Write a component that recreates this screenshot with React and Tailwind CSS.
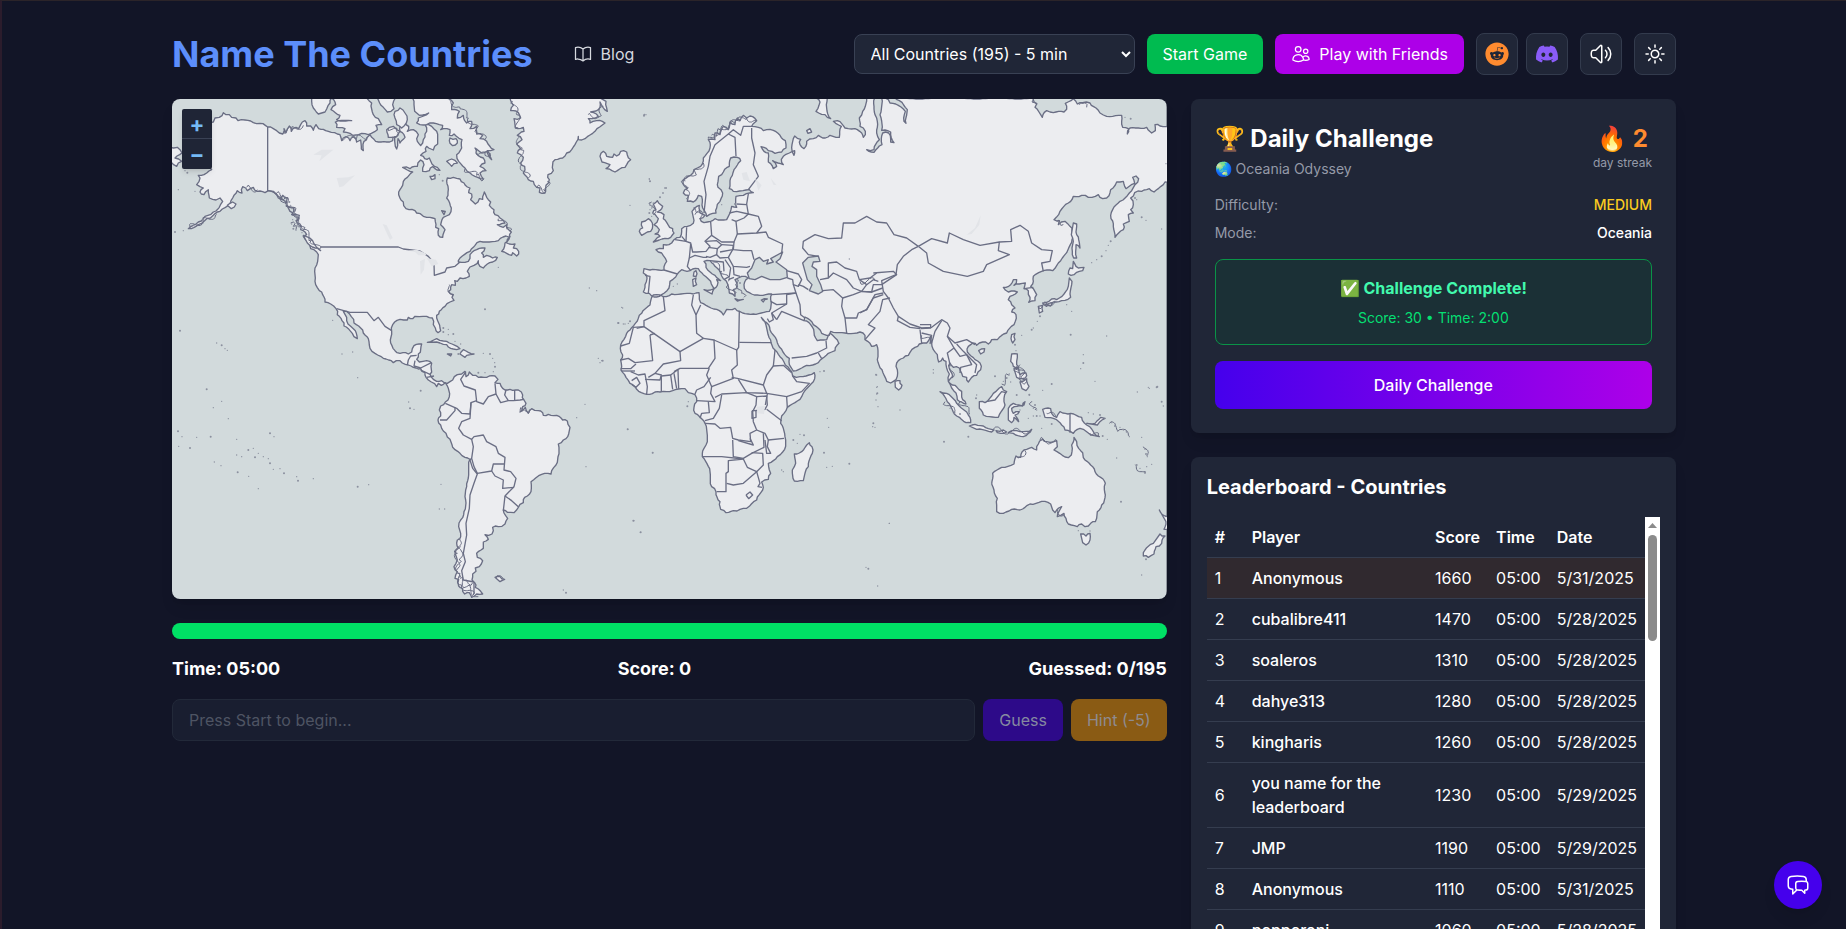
import { useState } from "react";
import { FaDiscord, FaReddit } from "react-icons/fa";
import {
  HiOutlineBookOpen,
  HiOutlineChatBubbleLeftRight,
  HiOutlineSpeakerWave,
  HiOutlineSun,
  HiOutlineUsers,
} from "react-icons/hi2";

const SCORES = [
  { player: "Anonymous", score: 1660, time: "05:00", date: "5/31/2025" },
  { player: "cubalibre411", score: 1470, time: "05:00", date: "5/28/2025" },
  { player: "soaleros", score: 1310, time: "05:00", date: "5/28/2025" },
  { player: "dahye313", score: 1280, time: "05:00", date: "5/28/2025" },
  { player: "kingharis", score: 1260, time: "05:00", date: "5/28/2025" },
  { player: "you name for the leaderboard", score: 1230, time: "05:00", date: "5/29/2025" },
  { player: "JMP", score: 1190, time: "05:00", date: "5/29/2025" },
  { player: "Anonymous", score: 1110, time: "05:00", date: "5/31/2025" },
  { player: "pepperoni", score: 1060, time: "05:00", date: "5/28/2025" },
];

// The world is drawn in six sheets, each with its own origin on the map
const SHEETS = {
  A: [-6, -3],
  B: [-6, 723],
  C: [1284, -3],
  D: [1284, 573],
  E: [2064, -3],
  F: [2064, 693],
};

// shape = [sheet, points, sheet, points, ...]
const toPoints = (shape) => {
  const out = [];
  for (let i = 0; i < shape.length; i += 2) {
    const [dx, dy] = SHEETS[shape[i]];
    shape[i + 1]
      .trim()
      .split(/\s+/)
      .forEach((p) => {
        const [x, y] = p.split(",").map(Number);
        out.push([x + dx, y + dy]);
      });
  }
  return out;
};

const trace = (shape) => toPoints(shape).join(" ");

// Breaks long straight runs into small uneven steps so coasts look natural
const fray = (shape, step, amp) => {
  const pts = toPoints(shape);
  const out = [];
  let n = 0;
  for (let i = 0; i < pts.length - 1; i++) {
    const [x1, y1] = pts[i];
    const [x2, y2] = pts[i + 1];
    const len = Math.hypot(x2 - x1, y2 - y1);
    const parts = Math.max(1, Math.round(len / step));
    out.push(pts[i]);
    for (let k = 1; k < parts; k++) {
      n++;
      const off = amp * Math.sin(n * 12.9 + x1 * 0.7 + y1 * 1.3);
      const x = x1 + ((x2 - x1) * k) / parts - ((y2 - y1) / len) * off;
      const y = y1 + ((y2 - y1) * k) / parts + ((x2 - x1) / len) * off;
      out.push([Math.round(x), Math.round(y)]);
    }
  }
  out.push(pts[pts.length - 1]);
  return out.join(" ");
};

const LAND = [
  // Americas
  [
    "A",
    `130,72 135,60 148,58 160,44 168,50 178,50 185,58 198,60 204,68 225,66 250,74 270,76 293,87 310,92 320,98 338,108 342,92 348,104 358,84 364,100
    378,88 386,92 392,80 405,68 410,84 422,84 430,97 438,80 446,92 460,94 475,100 494,104 510,110 515,128 528,116 540,128 552,116 560,132 572,126
    574,145 580,158 582,130 592,118 600,110 612,124 625,132 650,132 668,128 675,112 680,153 684,122 690,135 705,118 690,100 690,85 702,70 716,85 712,100 730,95
    745,110 740,122 752,143 760,125 765,108 770,100 765,80 785,85 800,100 803,138 790,156 770,145 768,160 752,172 764,182 778,180 786,198 802,208 810,217 788,206 778,218
    758,220 762,200 752,186 742,205 720,212 698,208 728,222 712,238 700,250 698,262 690,275 686,290 700,312 708,332 726,334 740,345 760,355 780,358 795,362
    797,388 806,392 805,412 818,418 825,395 812,380 820,358 838,350 844,330 836,308 830,300 834,265 832,240 850,238 870,243 882,255 900,270 896,284 905,288
    902,305 916,318 928,302 938,304 943,282 955,305 962,312 958,322 972,335 975,350 990,360 1005,375 982,380 1000,388 1010,380 1016,395 1024,402 1018,418 1008,414
    985,428 930,430 915,442 900,460 865,488 865,492 895,490 900,470 920,455 945,450 935,465 940,478 950,472 968,480 982,478 968,492 940,510 930,505 925,488
    912,502 900,507 892,520 898,535 888,540 870,540 862,550 854,548 856,562 845,560 842,575 836,580 850,590 846,598 852,607 840,612 825,625 808,640 800,652 806,675 812,698 804,704
    796,690 790,680 787,660 770,655 748,656 735,655 728,662 715,658 712,666 690,664 668,680 665,700 662,735 675,758 690,766 715,768 725,762 732,743 755,738 752,755 745,768`,
    "B",
    `745,42 740,58 748,66 770,62 785,70 784,88 780,103 790,118 800,124 815,122 832,130 848,120 862,104 875,102 885,94 888,110 898,96 908,106 925,112 950,112 975,108 984,118 975,128
    990,130 1005,150 1020,148 1045,150 1058,165 1062,180 1068,190 1058,200 1050,216 1066,202 1075,220 1085,206 1105,212 1118,218 1120,226 1135,223 1160,226 1178,240 1192,243 1200,262
    1196,282 1180,300 1165,312 1164,350 1158,375 1143,402 1115,403 1083,425 1083,455 1064,472 1060,488 1045,502 1032,518 1012,517 1000,510 1013,535 1005,552 985,560 968,562 966,582 945,584
    955,598 940,606 940,625 920,640 922,652 938,662 928,680 916,684 918,694 908,702 906,720 914,728 916,742 938,762 920,762 905,772 898,758 884,762 878,745 866,738 866,718
    855,715 862,695 852,680 862,660 855,640 865,625 862,600 872,590 866,560 872,540 882,515 887,480 890,440 896,405 900,358 885,352 870,340 848,322 840,298 828,280 812,255 804,240
    812,228 808,210 812,198 826,186 838,170 835,145 826,128 814,136 805,130 800,140 784,126 768,112 765,98 752,86 738,84 715,75 690,62 670,68 640,55 615,40 600,25 597,5`,
    "A",
    `595,722 580,705 572,690 552,675 544,656 530,640 520,640 530,658 534,678 550,692 562,722 552,716 540,698 522,684 516,668 502,650 498,632 482,618 465,612 458,590 448,578 435,550 435,510
    444,480 440,462 422,452 412,430 400,415 410,410 392,395 390,378 378,368 388,352 365,350 372,330 352,325 352,300 338,292 334,305 320,290 295,278 285,284 262,280 250,268 232,278 218,266 216,285 202,278
    188,300 180,318 150,340 130,352 110,362 85,380 55,392 85,372 105,355 130,342 148,328 158,310 150,300 138,306 118,300 115,275 102,290 90,282 100,270 80,260 90,240 85,232 110,225 125,215 100,200 80,180 90,150 100,120 95,90 130,72`,
  ],
  // Eurasia and Africa
  [
    "C",
    `430,52 440,60 450,54 470,68 455,85 475,88 490,98 520,97 540,112 556,128 558,150 545,162 525,166 505,158 483,146 492,160 505,165 505,192 520,212 530,205 518,188 550,200 544,184 568,165 584,158 582,172
    576,140 584,114 602,124 600,140 612,152 620,130 640,122 655,112 668,120 690,112 718,118 724,85 700,70 712,68 735,90 765,92 785,105 790,118 796,100 780,85 778,60 788,40 800,0 824,0
    825,50 832,70 830,105 838,125 822,155 800,155 822,163 846,140 848,105 866,105 872,132 882,134 872,102 845,97 840,50 845,0`,
    "E",
    `75,0 90,15 115,22 136,40 132,70 138,76 142,35 118,8 105,0 395,0 518,0 530,18 525,28 547,58 560,38 580,44 612,42 620,34 616,16 640,2 652,18 668,14 690,15 708,30 720,45 740,55 785,52 788,88 805,92 802,108 810,90
    860,88 875,105 886,98 885,80 900,84 935,82 935,250 915,252 882,282 868,272 845,280 824,284 812,300 820,320 812,335 820,345 805,350 808,370 790,378 790,395 765,418 760,385 753,362 758,335 780,310 808,285 825,260
    836,242 828,234 818,238 824,256 798,272 790,250 770,252 752,275 740,300 728,302 715,290 685,298 665,292 640,295 625,315 600,340 582,365 598,368 595,380 615,370 630,385 636,400 636,425 624,455 602,488 578,518 545,520
    520,535 520,550 512,565 530,590 525,608 506,613 510,598 505,578 492,572 496,555 478,558 462,562 470,545 460,545 452,560 430,568 445,582 472,582 450,595 445,605 455,620 465,630 455,642 468,650 462,680
    448,692 440,705 412,725 395,725 385,738 368,732 350,742 338,735 325,745 322,762 345,785 360,795 362,815 350,832 335,838 325,852 320,838 308,835 298,810 280,808 270,795 268,812 278,835 265,850 285,862 305,880 308,905 318,918
    305,912 292,905 288,885 275,870 265,850 268,828 258,790 248,780 236,792 232,770 220,755 215,735 212,715 200,735 178,738 165,748 145,772 130,780 110,795 112,815 108,845 92,855 80,850 66,815 52,785 50,740 35,745 15,725`,
    "C",
    `795,712 780,702 735,705 692,700 688,712 665,706 640,680 615,657 612,668 632,680 642,702 652,728 680,725 690,705 716,735`,
    "D",
    `717,160 705,182 685,190 655,218 620,226 580,243 573,232 568,205 545,178 530,150 510,120 500,98 484,82 498,105 512,150 525,180 540,200 556,225 575,245 578,258 600,260 643,248 640,275 605,320 562,352 545,378 542,400 555,440 554,478 532,500 505,520 512,550
    505,568 485,576 488,600 470,630 440,655 420,658 400,662 378,668 362,658 360,635 348,605 335,590 330,545 307,500 312,475 322,455 315,400 285,370 282,352 290,335 285,314 265,308 255,296 235,297 200,305
    180,306 165,306 140,313 110,298 90,280 78,262 63,240 62,210 68,195 62,165 80,130 90,120 115,85 125,70 150,45 160,15 190,20 215,12 280,12 297,8 302,38 325,50 350,58 370,75 380,58 405,55 420,65 460,72 500,65`,
    "C",
    `508,640 512,605 515,588 480,592 455,588 440,580 432,560 445,540 425,535 405,545 412,565 400,575 405,595 388,585 385,565 378,548 362,525 345,505 330,488 312,490 318,508 345,532 362,548 350,545 352,562 342,572 332,550 310,530
    295,512 270,518 245,515 232,528 210,550 207,570 185,590 162,597 148,586 130,582 135,560 140,532 130,525 132,512 150,516 192,516 200,490 185,465 168,455 190,452 190,440 215,435 222,425 240,418 245,392 262,385 280,376
    276,340 298,322 300,345 315,352 300,362 312,374 332,370 345,362 380,365 390,345 395,325 410,328 408,295 430,292 460,284 448,275 400,280 388,272 392,240 402,215 422,188 412,178 392,180 388,205 370,222 356,235 354,268 368,285 360,310 350,330
    348,345 320,355 308,330 305,295 295,292 280,312 262,310 265,292 250,285 262,270 250,260 250,245 272,232 282,215 302,205 310,180 330,150 325,125 345,125 345,105 360,110 370,85 385,95 390,72 405,80 412,60 420,68 430,52`,
  ],
  // Arctic islands
  ["A", "425,0 430,30 445,48 465,42 480,15 485,0"],
  ["A", "485,0 497,20 483,35 510,52 500,65 545,68 496,72 500,88 525,92 520,102 548,112 575,106 595,110 622,95 618,82 635,80 625,62 610,50 605,15 590,0"],
  ["A", "622,0 640,28 652,42 672,32 668,20 676,0"],
  ["A", "675,40 690,30 705,45 712,65 695,90 680,80 675,60 675,40"],
  ["A", "650,95 670,85 690,100 680,115 655,118 650,95"],
  ["A", "728,0 734,40 748,52 776,45 745,60 740,75 770,80 790,75 818,82 812,95 840,95 838,112 852,108 876,125 875,150 860,170 866,190 885,210 900,225 940,243 930,225 948,218 930,205 945,195 940,180 918,165 915,150 935,165 950,160 965,185 952,158 972,155 950,130 930,122 938,112 920,108 920,85 900,92 905,70 890,75 880,52 862,60 868,40 845,35 850,15 830,0"],
  ["A", "840,120 858,122 862,135 848,143 840,136 840,120"],
  ["A", "830,190 845,183 862,195 845,205 830,190"],
  ["A", "780,235 795,230 795,242 785,245"],
  ["A", "815,338 826,340 822,350"],
  ["A", "1020,415 1010,435 1035,438 1030,450 1046,460 1040,474 1028,464 1025,472 995,460 1005,435 1020,415"],
  ["A", "1020,0 1030,22 1022,38 1045,44 1052,60 1032,62 1036,90 1060,88 1062,100 1042,112 1056,125 1040,138 1052,152 1042,165 1060,178 1052,195 1064,205 1060,225 1075,245 1090,250 1100,268 1110,270 1108,283 1125,285 1128,262 1138,245 1134,230 1150,218 1148,200 1155,185 1178,180 1190,165 1205,155 1225,115 1225,125 1245,122 1275,100 1305,75 1280,68 1260,75 1255,62 1285,55 1262,42 1285,35 1290,12 1312,40 1308,10 1290,0"],
  ["A", "1290,175 1300,160 1310,175 1328,178 1332,168 1340,174 1352,160 1370,162 1382,185 1365,208 1335,222 1308,212 1320,200 1296,192"],
  ["A", "0,148 22,148 36,165 15,180 35,190 20,205 0,185"],
  ["A", "172,322 188,312 198,318 184,332"],
  ["A", "400,412 428,428 452,458 436,450 412,435"],
  // Caribbean
  ["A", "772,733 800,722 830,730 870,752 850,753 830,740 800,732"],
  ["A", "870,768 880,755 912,768 890,772 885,778"],
  ["B", "832,42 845,42 842,48"],
  // Falklands
  ["B", "975,712 990,710 1004,718 990,725"],
  // British Isles and the Mediterranean
  ["C", "160,318 172,308 188,325 172,342 192,350 190,362 204,380 218,392 222,405 205,422 160,432 180,415 165,408 178,395 162,380 175,362 158,345 168,335"],
  ["C", "125,372 145,362 157,375 152,400 125,412 118,400 128,390 125,372"],
  ["C", "278,545 288,540 290,560 280,565"],
  ["C", "282,522 288,518 288,536 280,534"],
  ["C", "312,575 342,572 336,588"],
  ["C", "405,602 430,604 412,609"],
  ["C", "484,606 502,603 490,612"],
  ["C", "648,0 660,12 648,40 675,50 692,62 680,30 682,0"],
  ["C", "620,98 630,92 635,102 624,106"],
  ["D", "628,458 636,470 637,490 625,530 610,572 583,573 577,540 587,520 583,492 605,485 628,458"],
  // Japan, Sakhalin, Taiwan
  ["E", "640,375 650,378 650,410 660,450 648,440 650,480 641,480 638,440 634,410"],
  ["E", "640,490 655,510 672,508 668,518 642,530 625,528 630,510 638,512"],
  ["E", "628,540 636,550 632,598 605,608 580,612 560,625 548,615 575,603 590,605 612,588 625,565"],
  ["E", "535,625 548,622 548,640 538,645"],
  ["E", "555,620 578,614 572,624"],
  ["E", "455,710 465,706 465,725 458,735 453,722"],
  ["E", "356,758 374,752 372,762 362,768"],
  ["E", "105,850 120,848 126,862 116,876 106,868"],
  ["E", "455,768 472,768 470,790 476,808 460,805 452,790"],
  ["E", "480,852 500,842 507,865 498,878 486,872"],
  ["E", "462,812 476,812 480,830 498,825 496,840 470,838"],
  // Indonesia and New Guinea
  ["F", "240,185 260,190 290,220 325,255 332,278 318,278 290,258 262,215 240,185"],
  ["F", "328,288 345,283 370,288 402,300 395,306 350,298"],
  ["F", "358,215 375,218 400,190 425,170 440,185 432,205 435,225 415,262 370,255 358,235"],
  ["F", "445,235 460,220 492,225 495,215 488,228 455,235 460,250 478,245 465,255 476,275 462,262 455,278 445,270"],
  ["F", "548,238 572,236 575,250 590,262 600,245 632,250 665,262 680,285 700,305 718,320 695,315 660,295 640,310 615,300 605,285 580,265 555,262"],
  ["F", "680,280 705,280 722,262 735,265 712,285"],
  ["F", "408,302 430,300 440,306 412,308"],
  ["F", "445,308 470,302 500,304 515,298 490,320 460,310"],
  // Australia, Tasmania, New Zealand
  [
    "F",
    `642,322 650,335 656,355 668,368 675,390 692,405 705,425 722,442 736,460 736,495 725,525 712,545 706,575 692,580 675,590 665,582 652,590 625,582 618,565 612,550 592,560 605,530 585,548 572,522 545,514 510,522 480,540 455,538 430,550
    410,545 412,505 402,480 395,462 398,430 425,412 462,402 468,378 482,382 492,360 515,352 530,360 535,342 548,328 560,335 590,332 592,350 582,360 625,383 634,375 635,345 642,322`,
  ],
  ["F", "662,612 678,618 690,610 690,630 678,645 668,638"],
  ["F", "900,612 915,618 905,640 888,650 882,672 865,682 850,678 855,660 880,640"],
  ["F", "898,540 915,558 930,565 930,600 912,598 918,575"],
];

const WATER = [
  ["C", "442,525 455,510 465,485 478,478 490,490 505,485 500,498 520,492 512,482 548,462 540,482 528,492 560,515 562,538 540,545 510,545 485,535 465,545 448,542"],
  ["C", "608,495 625,478 655,474 660,490 640,492 636,505 650,515 650,535 662,560 668,580 655,588 628,578 636,560 622,545 615,520"],
];

// Fjords and broken archipelago coasts
const FJORDS = [
  ["A", "318,288 345,300 355,325 375,340 385,365"],
  ["A", "335,295 350,320 370,345 380,360 395,385"],
  ["A", "385,365 400,395 425,425 448,455"],
  ["A", "362,375 370,385 378,398"],
  ["A", "230,268 262,275"],
  ["A", "60,388 100,368 140,348"],
  ["A", "340,100 365,92 400,82"],
  ["A", "515,122 560,120 590,118"],
  ["A", "655,90 680,100 672,118"],
  ["A", "840,8 870,30 895,60 920,92 945,125"],
  ["A", "920,165 945,172 960,165"],
  ["A", "885,212 920,232 942,242"],
  ["A", "1028,10 1040,50 1045,90"],
  ["A", "1045,115 1052,155 1055,200 1075,240"],
  ["A", "1100,268 1128,280 1132,250"],
  ["A", "1255,50 1290,55 1300,25"],
  ["A", "985,362 1010,385 1020,400"],
  ["A", "838,560 848,595"],
  ["B", "866,595 862,640 860,690"],
  ["B", "872,620 868,660 864,712"],
  ["B", "862,700 875,735 910,765"],
  ["B", "870,715 890,740 925,770"],
  ["B", "885,722 908,728"],
  ["B", "978,714 1000,718"],
  ["B", "1050,212 1080,208"],
  ["C", "325,122 360,95 400,72 440,60 468,68"],
  ["C", "335,112 375,88 420,65"],
  ["C", "252,245 258,275 262,305"],
  ["C", "255,250 285,222 310,195"],
  ["C", "280,330 296,338 302,365"],
  ["C", "285,350 310,352"],
  ["C", "155,312 160,350"],
  ["C", "385,560 402,590"],
  ["C", "410,545 425,580 432,598"],
  ["C", "338,490 365,520 385,550"],
  ["E", "470,805 490,830 495,845"],
  ["E", "462,815 478,845 500,850"],
  ["E", "480,800 488,830"],
  ["E", "592,370 610,378"],
  ["E", "535,625 560,618 585,608"],
  ["E", "270,812 276,840"],
  ["E", "425,858 448,832"],
  ["E", "185,712 210,728"],
  ["E", "655,15 680,28"],
  ["E", "520,5 530,20"],
  ["E", "0,550 45,548"],
  ["F", "255,215 285,250"],
  ["F", "300,215 330,252"],
  ["F", "400,298 450,305 512,302"],
  ["F", "515,215 525,240"],
  ["F", "748,280 780,298 808,318"],
  ["F", "690,310 715,318"],
  ["F", "850,350 860,378"],
  ["F", "826,404 855,430"],
  ["F", "592,540 612,555"],
  ["F", "540,330 590,335"],
  ["F", "475,385 495,362"],
  ["F", "560,250 590,262"],
];

const BORDERS = [
  ["A", "293,87 293,278 310,280 325,295 345,310 360,340 380,350"],
  ["A", "452,447 685,447 700,453 750,459 775,475 792,495 793,532 825,522 830,510 855,505 870,492"],
  ["A", "500,632 540,643 592,643 612,668 625,658 645,685 664,697"],
  ["B", "712,75 715,60 722,48 740,46"],
  ["B", "735,62 732,78 752,84 784,68"],
  ["B", "752,90 780,103"],
  ["B", "770,112 792,108"],
  // South America
  ["B", "888,95 872,118 882,138 916,150 920,185 940,192 955,170 978,162 975,130"],
  ["B", "826,190 860,205 875,220 900,222 903,188 920,182"],
  ["B", "810,240 830,240 855,212 855,202"],
  ["B", "903,188 900,235 875,245 866,265 880,285 905,298 912,290 940,285 950,305 978,320 985,340 1005,352 1002,390 1022,395 1038,415 1032,440 1005,468 1000,512"],
  ["B", "905,298 910,320 905,355 912,380 922,400 965,393 970,372 1002,372"],
  ["B", "965,393 975,408 1000,420 998,445 1032,442"],
  ["B", "1005,468 1025,482 1045,500"],
  ["B", "905,355 900,360 908,385 922,402 912,430 900,465 898,505 888,550 890,585 880,640 886,665 875,692 880,720 912,726"],
  ["B", "978,162 992,188 1015,182 1030,182 1050,180 1062,178"],
  ["B", "1008,150 1004,165 1015,182"],
  ["B", "1034,150 1034,182"],
  ["B", "912,728 912,762"],
  // Scandinavia
  ["C", "312,345 318,290 312,250 325,205 330,175 345,140 385,108 405,118 408,175"],
  ["C", "385,108 400,95 422,112 430,85 455,85"],
  ["C", "455,90 455,120 465,165 460,200 475,235 445,275"],
  // Europe
  ["C", "445,288 440,318 445,348 410,340 388,345"],
  ["C", "410,318 440,320"],
  ["C", "445,348 475,355 485,385 470,405 412,408 408,370 432,360 445,348"],
  ["C", "395,365 408,370"],
  ["C", "332,372 335,412 365,432 402,432 412,408"],
  ["C", "335,412 315,430 330,445 318,460 290,462 278,462 272,435 258,430 260,388"],
  ["C", "245,415 258,430 225,425"],
  ["C", "272,438 268,480 285,472 310,478 322,478"],
  ["C", "318,430 350,428 365,440 352,452 325,448"],
  ["C", "352,452 350,470 330,478 318,475"],
  ["C", "365,440 400,442 398,455 360,462"],
  ["C", "350,470 360,480 385,478 398,455"],
  ["C", "402,432 400,455 430,458 455,458 462,485"],
  ["C", "385,478 400,505 440,508 450,505"],
  ["C", "400,505 402,530 420,535"],
  ["C", "330,488 370,492 372,520"],
  ["C", "375,485 392,510 388,535 372,545"],
  ["C", "385,545 402,538"],
  ["C", "268,480 262,505 272,518"],
  ["C", "192,516 232,528"],
  ["C", "135,532 150,535 145,585"],
  ["C", "470,405 498,402 505,418 548,438 545,465"],
  ["C", "560,518 595,528 605,545 595,565 580,560 578,545 562,540"],
  ["C", "580,560 588,585 515,590"],
  // Middle East
  ["C", "588,585 600,620 602,650 615,660"],
  ["C", "588,585 560,590 560,618 515,645 530,665"],
  ["C", "512,610 530,620 560,618"],
  ["C", "515,645 520,665 508,672 502,662"],
  ["C", "530,665 545,640 612,668"],
  ["C", "575,780 620,775 650,765 680,750 678,728"],
  ["C", "655,765 665,782"],
  ["C", "595,560 610,565 625,575"],
  ["C", "668,578 700,575 728,600 725,625 735,660 740,705"],
  ["C", "735,660 770,660 775,645 800,635 820,600 850,590"],
  ["C", "728,600 760,590 785,580 815,582 848,570"],
  // Central Asia
  ["C", "655,475 625,470 608,450 610,430 645,410 685,422 725,420 730,375 765,375 800,355 830,372 860,375 882,410 920,420 955,445"],
  ["C", "660,545 685,540 685,495 710,492 735,510 770,520 778,545 810,540 830,525"],
  ["C", "685,540 700,525 740,545 760,570 785,580"],
  ["C", "778,545 800,560 785,580 815,582 820,560 845,560 890,530 880,520 820,525"],
  ["C", "800,560 820,545 835,550"],
  // South and East Asia
  ["E", "175,445 155,455 130,475 112,500 108,530 65,548 70,580 85,600 100,630 115,655 150,678 185,690 215,688 245,665 262,675 270,690 262,715 285,735 320,725 345,740"],
  ["E", "15,725 45,690 25,680 60,640 68,605 90,600"],
  ["E", "0,645 20,635 45,590 70,585"],
  ["E", "115,655 112,668 150,688 180,692"],
  ["E", "180,680 212,680 212,690 182,692"],
  ["E", "180,695 185,735"],
  ["E", "185,705 215,712 210,738"],
  ["E", "245,668 225,700 215,735"],
  ["E", "175,445 215,422 262,435 268,405 310,425 360,442 418,432 415,458 448,470 380,500 370,520 322,535 250,520 205,495 200,465 175,445"],
  ["E", "418,432 455,430 452,395 480,382 505,400 515,435 545,455 577,458 570,490 545,495 550,520"],
  ["E", "262,715 282,750 262,765 268,790 270,805"],
  ["E", "282,750 300,775 320,770 335,800 302,808 300,825"],
  ["E", "290,738 310,760 330,780 350,800 345,825"],
  ["E", "492,572 520,568"],
  ["F", "378,215 405,210 425,185 438,188"],
  ["F", "630,250 630,308"],
  // North Africa
  ["D", "190,20 195,62 132,92 132,110 110,115"],
  ["D", "132,110 100,112 88,160 62,168"],
  ["D", "132,110 240,185 310,145 290,130 288,75 275,45 280,15"],
  ["D", "288,75 302,45"],
  ["D", "150,135 158,212 105,218 85,205 62,210"],
  ["D", "150,135 165,130"],
  ["D", "240,185 242,212 190,222 165,250 145,262"],
  ["D", "310,145 342,150 345,205 325,235 240,235 222,245"],
  ["D", "342,150 410,180 416,172 418,62"],
  ["D", "410,180 412,225 395,240 400,265 335,290 320,255 328,235"],
  ["D", "418,157 515,158"],
  ["D", "525,180 520,228 550,226 575,248"],
  ["D", "520,228 500,255 490,285 412,265 395,262"],
  ["D", "490,285 500,310 440,308 415,268"],
  ["D", "500,310 560,320 605,305 628,280 590,275 578,258"],
  ["D", "560,320 562,352"],
  // West Africa
  ["D", "62,236 92,236 108,222"],
  ["D", "66,243 105,243"],
  ["D", "92,245 115,255 135,252 142,290 140,312"],
  ["D", "95,272 110,262 120,280 108,292 96,284"],
  ["D", "135,268 180,270 184,255 165,250"],
  ["D", "184,258 184,305"],
  ["D", "212,255 218,298"],
  ["D", "184,258 212,255 235,238"],
  ["D", "222,250 230,296"],
  ["D", "234,240 236,296"],
  ["D", "332,262 312,290 290,300 285,312"],
  ["D", "335,290 332,310 345,335 290,332"],
  // Central and southern Africa
  ["D", "345,322 365,312 440,308 470,320 468,345 458,365 460,395 470,420 450,430 452,455 415,450 398,445 392,412 360,415 345,402 315,400"],
  ["D", "365,315 358,355 340,385 315,392"],
  ["D", "325,335 328,368 305,370 300,385"],
  ["D", "470,320 500,318 502,345 495,358 465,362"],
  ["D", "500,358 545,392"],
  ["D", "456,362 468,362 468,382 456,385 456,362"],
  ["D", "470,420 495,430 505,450 552,445"],
  ["D", "490,430 492,472 455,490 430,505 400,500 398,450"],
  ["D", "505,450 502,470 512,490 500,490 495,450"],
  ["D", "415,452 460,465 450,445"],
  ["D", "307,500 365,500 430,507 385,512 385,545 378,550 378,605 350,605"],
  ["D", "430,507 442,532 470,545 490,525 488,490 455,488"],
  ["D", "470,545 430,580 400,585 380,580"],
  ["D", "470,545 480,580 474,590 486,592"],
  ["D", "438,615 450,606 458,615 446,626 438,615"],
  ["D", "502,312 496,345"],
];

const LAKES = [
  ["A", "715,458 740,455 765,465 770,472 745,472 735,462"],
  ["A", "750,490 765,482 762,515 752,530"],
  ["A", "770,480 798,485 805,498 785,505"],
  ["A", "638,378 650,382 668,420 660,425 650,405"],
  ["A", "430,170 455,155 490,155 470,172 448,190 455,172"],
  ["A", "500,240 535,238 555,232 520,265 508,268"],
  ["C", "465,240 485,262 475,278"],
  ["C", "512,240 530,262 520,260"],
  ["C", "425,225 440,222 450,250 430,245"],
  ["E", "320,410 345,390 362,352 358,380 335,408"],
  ["D", "470,350 495,348 492,372 472,370"],
];

// Specks of island, too small to have an outline
const ISLETS = [
  ["A", "1422,53 1428,50 1438,243 1440,250 1484,270 1478,285 1470,298 1450,315 1445,330 1450,345 1440,322 1355,628 1345,675 1360,678 1375,676 1380,670 1258,570 1280,578 945,634 985,508 140,735 155,742 165,752 172,757 30,698 25,275 45,218 52,224 75,280 365,378 370,392 368,365 488,667 820,690 835,694 835,710 850,708 855,730 872,738 820,702 548,762 516,768 865,768 345,295 350,305 358,312 362,322 350,318 372,345 366,332 380,360 385,372 398,392 396,404 818,248 808,230 1010,392 100,365 70,382 40,398 15,402"],
  ["B", "110,148 155,184 130,203 24,274 36,290 80,292 122,290 175,236 200,298 300,280 312,290 26,319 60,324 200,345 215,350 235,330 250,325 265,340 255,352 280,350 295,356 300,370 310,388 330,386 342,400 133,366 153,377 203,397 236,409 380,410 384,422 430,416 265,446 563,440 596,434 813,433 720,205 732,208 716,186 752,152 1245,193 1220,233 1373,268 1448,338 1248,380 1390,542 1411,577 1180,750 1188,758 808,507 824,507 960,42 968,55 974,68 975,80 970,95 940,40 925,98 945,98 1285,55 1298,62 1290,68 563,113"],
  ["C", "133,50 148,243 150,250 198,270 190,285 150,315 158,325 150,335 155,355 148,345 90,322 365,320 405,318 232,558 220,565 408,560 415,575 425,585 420,555 748,483 68,630 55,675 75,678"],
  ["D", "262,349 265,335 83,418 158,488 682,385 686,412 672,488 680,532 697,529 748,521 550,545 545,540 122,727 102,692 868,700 580,450 592,460 600,433 612,436 830,255 832,290 832,310 828,330 834,350 820,400 825,412 5,212 672,243 660,245"],
  ["E", "845,358 858,367 905,393 752,430 745,442 738,458 725,475 710,485 695,494 540,655 532,670 520,690 515,695 485,712 670,770 670,795 662,812 635,640 632,710 620,620 705,850 575,858 548,877 832,882 892,866 865,868 740,714 465,740 468,758 430,850 440,840 448,828 452,852 508,890 220,815 220,825 405,835 50,868 50,888 48,830 600,375 605,382 825,300 830,305 795,58 812,62 918,197"],
  ["F", "252,335 88,580 18,712 25,716 53,768 845,735 858,688 655,602 690,603 783,515 270,235 280,245 300,252 515,215 520,235 525,225 530,240 545,295 575,282 480,240 505,265 530,258 540,258 520,258 470,195 508,195 755,278 765,288 780,292 790,300 800,305 808,320 742,328 728,318 845,322 855,358 858,372 862,380 875,403 830,405 840,415 850,425 855,428 860,410 910,228 905,215 700,252 685,248 890,172 868,175 350,195 348,205 120,240 38,290 325,320 770,384 735,265 720,255 395,462"],
];

const WorldMap = () => (
  <svg viewBox="0 0 2984 1500" preserveAspectRatio="xMidYMid slice" className="block h-full w-full" role="img" aria-label="World map">
    <rect width="2984" height="1500" fill="#d2dadc" />
    <g stroke="#6a6e84" strokeWidth="4" strokeLinejoin="round">
      <g fill="#ecedf0">
        {LAND.map((s, i) => (
          <polygon key={i} points={fray(s, 9, 3)} />
        ))}
      </g>
      <g fill="#d2dadc">
        {WATER.map((s, i) => (
          <polygon key={i} points={trace(s)} />
        ))}
      </g>
      <g fill="none">
        {BORDERS.map((s, i) => (
          <polyline key={i} points={trace(s)} />
        ))}
      </g>
      <g fill="none" strokeWidth="3">
        {FJORDS.map((s, i) => (
          <polyline key={i} points={fray(s, 3, 9)} />
        ))}
      </g>
    </g>
    <g fill="#e2e4e8">
      {LAKES.map((s, i) => (
        <polygon key={i} points={trace(s)} />
      ))}
    </g>
    <g fill="#8b909f">
      {ISLETS.map((s) =>
        toPoints(s).map(([x, y], i) => <circle key={`${x}-${y}-${i}`} cx={x} cy={y} r={i % 3 === 0 ? 3 : 2} />)
      )}
    </g>
  </svg>
);

const iconButton =
  "flex h-[42px] w-[42px] items-center justify-center rounded-lg border border-[#333b4d] bg-[#202637]";

function Header() {
  return (
    <header className="mb-6 flex flex-wrap items-center justify-between gap-4">
      <div className="flex items-center gap-8">
        <h1 className="text-4xl font-bold text-[#5c8efb]">Name The Countries</h1>
        <a href="#blog" className="flex items-center gap-2 px-2 text-[#d5d8de]">
          <HiOutlineBookOpen className="h-5 w-5" />
          Blog
        </a>
      </div>
      <div className="flex flex-wrap items-center gap-3">
        <select
          aria-label="Game mode"
          className="h-10 w-[281px] rounded-lg border border-[#394154] bg-[#202637] px-3 text-white"
        >
          <option>All Countries (195) - 5 min</option>
        </select>
        <button type="button" className="h-10 rounded-lg bg-[#00bb50] px-4 text-white">
          Start Game
        </button>
        <button type="button" className="flex h-10 items-center gap-2 rounded-lg bg-[#ad00e8] px-4 text-white">
          <HiOutlineUsers className="h-5 w-5" />
          Play with Friends
        </button>
        <div className="flex items-center gap-2">
          <a href="#reddit" aria-label="Reddit" className={iconButton}>
            <FaReddit className="h-6 w-6 text-[#ff8b2f]" />
          </a>
          <a href="#discord" aria-label="Discord" className={iconButton}>
            <FaDiscord className="h-6 w-6 text-[#8a5cf8]" />
          </a>
        </div>
        <button type="button" aria-label="Sound" className={iconButton}>
          <HiOutlineSpeakerWave className="h-6 w-6" />
        </button>
        <button type="button" aria-label="Theme" className={iconButton}>
          <HiOutlineSun className="h-6 w-6" />
        </button>
      </div>
    </header>
  );
}

function Game() {
  const [guess, setGuess] = useState("");

  return (
    <section className="lg:col-span-2">
      <div className="relative h-[500px] overflow-hidden rounded-lg shadow-lg">
        <WorldMap />
        <div className="absolute top-[10px] left-[10px] flex flex-col overflow-hidden rounded-xs text-[22px] leading-7 font-bold text-[#74baf5] shadow-md">
          <button type="button" aria-label="Zoom in" className="flex h-[30px] w-[30px] items-center justify-center border-b border-[#3a4255] bg-[#1f2536]">
            +
          </button>
          <button type="button" aria-label="Zoom out" className="flex h-[30px] w-[30px] items-center justify-center bg-[#1f2536]">
            −
          </button>
        </div>
      </div>

      <div className="mt-6 mb-4 h-4 rounded-full bg-[#00e065]" />

      <div className="mb-4 flex justify-between text-lg font-bold">
        <span>Time: 05:00</span>
        <span>Score: 0</span>
        <span>Guessed: 0/195</span>
      </div>

      <form className="flex gap-2" onSubmit={(e) => e.preventDefault()}>
        <input
          type="text"
          aria-label="Your guess"
          value={guess}
          onChange={(e) => setGuess(e.target.value)}
          disabled
          placeholder="Press Start to begin..."
          className="h-[42px] min-w-0 flex-1 rounded-lg border border-[#222939] bg-[#191e30] px-4 placeholder:text-[#4e5463]"
        />
        <button type="submit" disabled className="rounded-lg bg-[#2d0a89] px-4 text-[#8589a0]">
          Guess
        </button>
        <button type="button" disabled className="rounded-lg bg-[#8a5b14] px-4 text-[#8f8b90]">
          Hint (-5)
        </button>
      </form>
    </section>
  );
}

function DailyChallenge() {
  return (
    <section className="rounded-lg bg-[#202637] p-6 shadow-lg">
      <div className="mb-4 flex items-start justify-between">
        <div>
          <h2 className="text-2xl font-bold">🏆 Daily Challenge</h2>
          <p className="mt-1 text-sm text-[#959aa8]">🌏 Oceania Odyssey</p>
        </div>
        <div className="text-center">
          <div className="text-2xl font-bold text-[#ff8b2f]">🔥 2</div>
          <div className="text-xs text-[#959aa8]">day streak</div>
        </div>
      </div>

      <dl className="mb-4 space-y-2 text-sm">
        <div className="flex justify-between">
          <dt className="text-[#959aa8]">Difficulty:</dt>
          <dd className="font-medium text-[#fbcb1f]">MEDIUM</dd>
        </div>
        <div className="flex justify-between">
          <dt className="text-[#959aa8]">Mode:</dt>
          <dd className="font-medium">Oceania</dd>
        </div>
      </dl>

      <div className="mb-4 rounded-lg border border-[#0a9347] bg-[#1b3036] p-4 text-center">
        <p className="mb-2 font-bold text-[#42f9ad]">✅ Challenge Complete!</p>
        <p className="text-sm text-[#05df72]">Score: 30 • Time: 2:00</p>
      </div>

      <button type="button" className="h-12 w-full rounded-lg bg-linear-to-r/srgb from-[#4500ec] to-[#ad00e8] font-medium">
        Daily Challenge
      </button>
    </section>
  );
}

function Leaderboard() {
  return (
    <section className="rounded-lg bg-[#202637] p-4 shadow-lg">
      <h2 className="mb-4 text-xl font-bold">Leaderboard - Countries</h2>
      <div className="flex">
        <table className="min-w-0 flex-1 text-left">
          <thead>
            <tr className="border-b border-[#353d4f]">
              <th className="w-[37px] p-2 font-semibold">#</th>
              <th className="p-2 font-semibold">Player</th>
              <th className="w-[61px] p-2 font-semibold">Score</th>
              <th className="w-[60px] p-2 font-semibold">Time</th>
              <th className="w-24 p-2 font-semibold">Date</th>
            </tr>
          </thead>
          <tbody>
            {SCORES.map((row, i) => (
              <tr key={i} className={i === 0 ? "border-b border-[#353d4f] bg-[#30292f]" : "border-b border-[#353d4f]"}>
                <td className="p-2">{i + 1}</td>
                <td className="p-2 font-medium">{row.player}</td>
                <td className="p-2">{row.score}</td>
                <td className="p-2">{row.time}</td>
                <td className="p-2">{row.date}</td>
              </tr>
            ))}
          </tbody>
        </table>
        <div className="flex w-[15px] shrink-0 flex-col items-center bg-white pt-[6px]" aria-hidden="true">
          <svg viewBox="0 0 9 5" className="mb-[7px] h-[5px] w-[9px]">
            <path d="M0 5 4.500 0 9 5Z" fill="#8b8b8b" />
          </svg>
          <div className="h-[106px] w-[9px] rounded-full bg-[#8b8b8b]" />
        </div>
      </div>
    </section>
  );
}

export default function App() {
  return (
    <div className="min-h-screen border-t border-l-2 border-t-[#2b2429] border-l-[#2b1c2c] bg-[#121527] font-[Inter,sans-serif] text-white">
      <main className="mx-auto max-w-screen-2xl px-4 py-8">
        <Header />
        <div className="grid grid-cols-1 gap-6 lg:grid-cols-3">
          <Game />
          <div className="space-y-6">
            <DailyChallenge />
            <Leaderboard />
          </div>
        </div>
      </main>
      <button
        type="button"
        aria-label="Feedback"
        className="fixed right-6 bottom-5 flex h-12 w-12 items-center justify-center rounded-full bg-[#4500ec] shadow-lg"
      >
        <HiOutlineChatBubbleLeftRight className="h-6 w-6" />
      </button>
    </div>
  );
}
